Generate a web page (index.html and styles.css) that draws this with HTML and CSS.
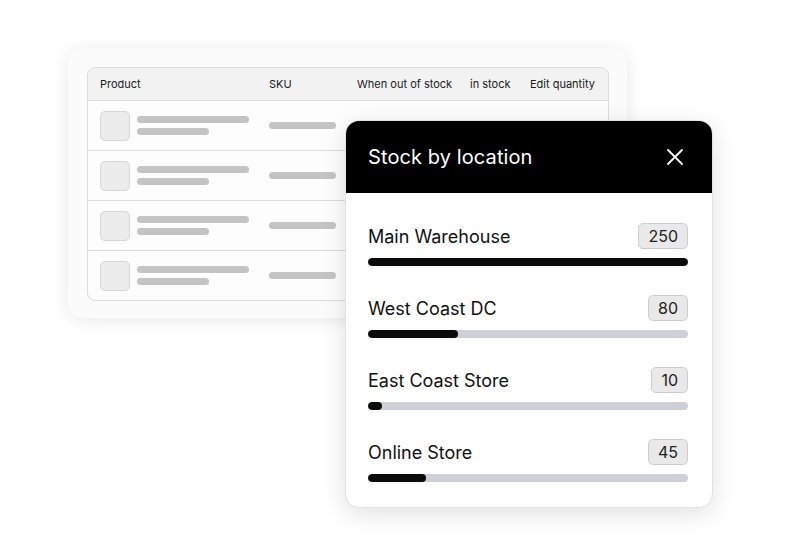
FILE: index.html
```html
<!DOCTYPE html>
<html lang="en">

<head>
    <meta charset="UTF-8">
    <meta name="viewport" content="width=device-width, initial-scale=1.0">
    <title>Inventory</title>
    <link rel="stylesheet" href="styles.css">
</head>

<body>
    <div class="stage">
        <!-- product table in the background -->
        <div class="card">
            <div class="table">
                <div class="row head">
                    <span>Product</span>
                    <span>SKU</span>
                    <span>When out of stock</span>
                    <span>in stock</span>
                    <span>Edit quantity</span>
                </div>
                <div class="row">
                    <div class="product">
                        <div class="thumb"></div>
                        <div class="lines">
                            <div class="line long"></div>
                            <div class="line short"></div>
                        </div>
                    </div>
                    <div class="line sku"></div>
                </div>
                <div class="row">
                    <div class="product">
                        <div class="thumb"></div>
                        <div class="lines">
                            <div class="line long"></div>
                            <div class="line short"></div>
                        </div>
                    </div>
                    <div class="line sku"></div>
                </div>
                <div class="row">
                    <div class="product">
                        <div class="thumb"></div>
                        <div class="lines">
                            <div class="line long"></div>
                            <div class="line short"></div>
                        </div>
                    </div>
                    <div class="line sku"></div>
                </div>
                <div class="row last">
                    <div class="product">
                        <div class="thumb"></div>
                        <div class="lines">
                            <div class="line long"></div>
                            <div class="line short"></div>
                        </div>
                    </div>
                    <div class="line sku"></div>
                </div>
            </div>
        </div>

        <!-- stock popup -->
        <div class="popup">
            <div class="popup-head">
                <h2>Stock by location</h2>
                <svg class="close" width="18" height="18" viewBox="0 0 18 18">
                    <path d="M2 2 L16 16 M16 2 L2 16" stroke="#fff" stroke-width="1.8" stroke-linecap="round" fill="none" />
                </svg>
            </div>
            <div class="popup-body">
                <div class="loc">
                    <div class="loc-top">
                        <span class="loc-name">Main Warehouse</span>
                        <span class="badge">250</span>
                    </div>
                    <div class="track"><div class="fill" style="width: 100%"></div></div>
                </div>
                <div class="loc">
                    <div class="loc-top">
                        <span class="loc-name">West Coast DC</span>
                        <span class="badge">80</span>
                    </div>
                    <div class="track"><div class="fill" style="width: 28%"></div></div>
                </div>
                <div class="loc">
                    <div class="loc-top">
                        <span class="loc-name">East Coast Store</span>
                        <span class="badge">10</span>
                    </div>
                    <div class="track"><div class="fill" style="width: 4.5%"></div></div>
                </div>
                <div class="loc">
                    <div class="loc-top">
                        <span class="loc-name">Online Store</span>
                        <span class="badge">45</span>
                    </div>
                    <div class="track"><div class="fill" style="width: 18%"></div></div>
                </div>
            </div>
        </div>
    </div>
</body>

</html>
```

FILE: styles.css
```css
body {
    font-family: Inter, "Liberation Sans", sans-serif;
    background-color: #ffffff;
    margin: 0;
    padding: 0;
    color: #111;
}

.stage {
    position: relative;
    width: 800px;
    height: 555px;
    overflow: hidden;
}

/* background table card */
.card {
    margin: 48px 0 0 68px;
    width: 559px;
    height: 270px;
    box-sizing: border-box;
    padding: 19px 18px 17px 19px;
    background: #fbfbfb;
    border-radius: 14px;
    box-shadow: 0 2px 18px rgba(0, 0, 0, 0.09);
}

.table {
    border: 1px solid #dcdcdc;
    border-radius: 8px;
    background: #fdfdfd;
    overflow: hidden;
}

.row {
    display: grid;
    grid-template-columns: 169px 88px 113px 60px 1fr;
    align-items: center;
    height: 49px;
    padding-left: 12px;
    border-bottom: 1px solid #dadada;
}

.row.last {
    border-bottom: none;
}

.row.head {
    height: 32px;
    background: #f2f2f2;
    font-size: 11px;
    color: #1a1a1a;
}

.product {
    display: flex;
    align-items: center;
    gap: 7px;
}

.thumb {
    width: 28px;
    height: 28px;
    border: 1px solid #d6d6d6;
    border-radius: 5px;
    background: #ececec;
}

.lines {
    display: flex;
    flex-direction: column;
    gap: 5px;
}

.line {
    height: 7px;
    border-radius: 4px;
    background: #c4c4c4;
}

.line.long {
    width: 112px;
}

.line.short {
    width: 72px;
}

.line.sku {
    width: 67px;
}

/* popup */
.popup {
    position: absolute;
    left: 345px;
    top: 120px;
    width: 368px;
    height: 388px;
    background: #fff;
    border-radius: 14px;
    border: 1px solid #e2e2e2;
    box-sizing: border-box;
    box-shadow: 0 6px 24px rgba(0, 0, 0, 0.12);
    overflow: hidden;
}

.popup-head {
    display: flex;
    align-items: center;
    justify-content: space-between;
    height: 72px;
    padding: 0 28px 0 22px;
    background: #000;
    color: #fff;
}

.popup-head h2 {
    margin: 0;
    font-size: 20px;
    font-weight: 400;
    letter-spacing: 0.1px;
}

.popup-body {
    display: flex;
    flex-direction: column;
    gap: 29px;
    padding: 30px 24px 0 22px;
}

.loc {
    display: flex;
    flex-direction: column;
    gap: 9px;
}

.loc-top {
    display: flex;
    align-items: center;
    justify-content: space-between;
    height: 26px;
}

.loc-name {
    font-size: 18px;
    color: #111;
}

.badge {
    height: 24px;
    line-height: 24px;
    padding: 0 9px;
    font-size: 16px;
    background: #e9e9e9;
    border: 1px solid #cdcdcd;
    border-radius: 5px;
    color: #222;
}

.track {
    height: 8px;
    border-radius: 4px;
    background: #cdd1d7;
    overflow: hidden;
}

.fill {
    height: 100%;
    border-radius: 4px;
    background: #0a0a0a;
}
```
